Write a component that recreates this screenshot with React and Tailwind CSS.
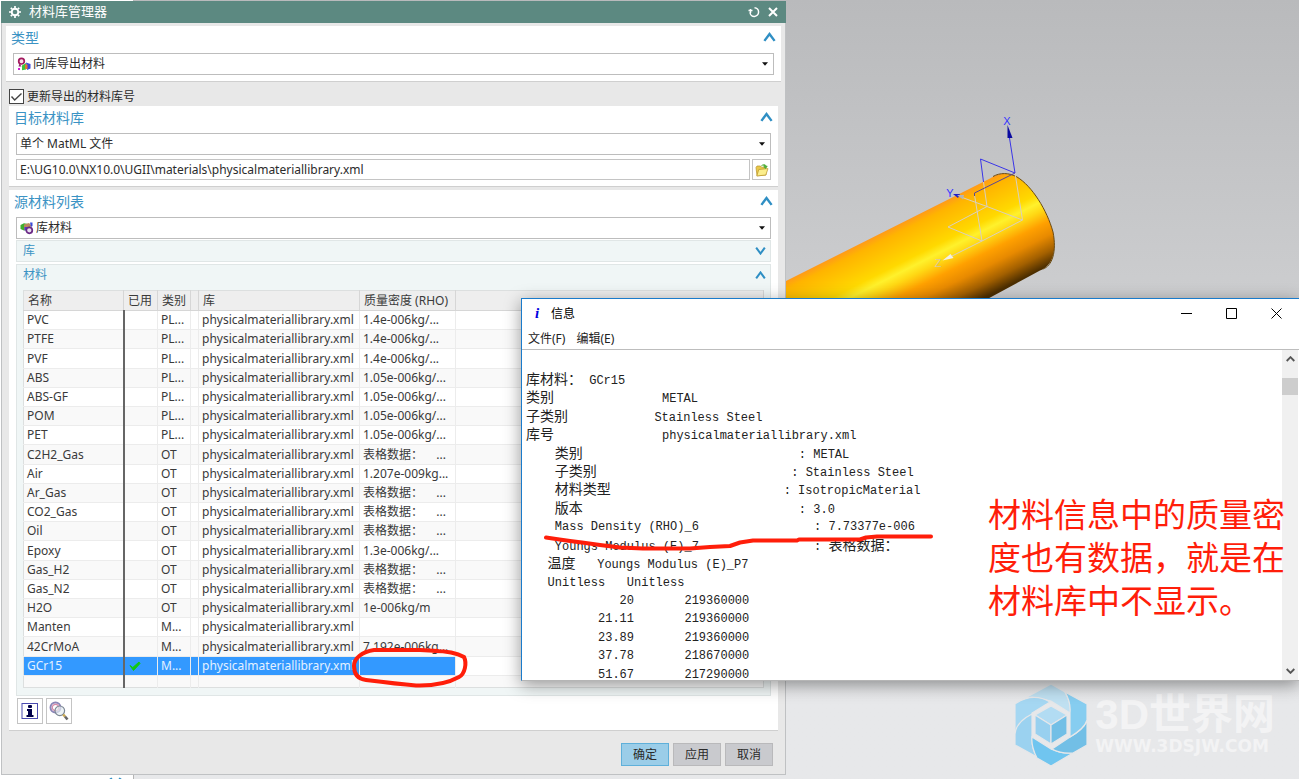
import { useState } from "react";
import clsx from "clsx";

const materials = [
  { name: "PVC", category: "PL...", density: "1.4e-006kg/..." },
  { name: "PTFE", category: "PL...", density: "1.4e-006kg/..." },
  { name: "PVF", category: "PL...", density: "1.4e-006kg/..." },
  { name: "ABS", category: "PL...", density: "1.05e-006kg/..." },
  { name: "ABS-GF", category: "PL...", density: "1.05e-006kg/..." },
  { name: "POM", category: "PL...", density: "1.05e-006kg/..." },
  { name: "PET", category: "PL...", density: "1.05e-006kg/..." },
  { name: "C2H2_Gas", category: "OT", tabular: true },
  { name: "Air", category: "OT", density: "1.207e-009kg..." },
  { name: "Ar_Gas", category: "OT", tabular: true },
  { name: "CO2_Gas", category: "OT", tabular: true },
  { name: "Oil", category: "OT", tabular: true },
  { name: "Epoxy", category: "OT", density: "1.3e-006kg/..." },
  { name: "Gas_H2", category: "OT", tabular: true },
  { name: "Gas_N2", category: "OT", tabular: true },
  { name: "H2O", category: "OT", density: "1e-006kg/m" },
  { name: "Manten", category: "M...", density: "" },
  { name: "42CrMoA", category: "M...", density: "7.192e-006kg..." },
  { name: "GCr15", category: "M...", density: "", used: true },
];

const pad = (n) => " ".repeat(n);

const row = (temp, value) => temp.padStart(15) + value.padStart(16);

const report = [
  "库材料： GCr15",
  "类别" + pad(15) + "METAL",
  "子类别" + pad(12) + "Stainless Steel",
  "库号" + pad(15) + "physicalmateriallibrary.xml",
  pad(4) + "类别" + pad(30) + ": METAL",
  pad(4) + "子类别" + pad(27) + ": Stainless Steel",
  pad(4) + "材料类型" + pad(24) + ": IsotropicMaterial",
  pad(4) + "版本" + pad(30) + ": 3.0",
  pad(4) + "Mass Density (RHO)_6" + pad(16) + ": 7.73377e-006",
  pad(4) + "Youngs Modulus (E)_7" + pad(16) + ": 表格数据：",
  pad(3) + "温度" + pad(3) + "Youngs Modulus (E)_P7",
  pad(3) + "Unitless" + pad(3) + "Unitless",
  row("20", "219360000"),
  row("21.11", "219360000"),
  row("23.89", "219360000"),
  row("37.78", "218670000"),
  row("51.67", "217290000"),
];

function Chevron({ down, small }) {
  return (
    <svg
      viewBox="0 0 14 10"
      className={clsx(small ? "h-2 w-[11px]" : "h-[10px] w-[13px]", down && "rotate-180")}
      fill="none"
      stroke="#2f8fc4"
      strokeWidth="2.6"
    >
      <path d="M1.5 9.2 7 1.8l5.500 7.400" />
    </svg>
  );
}

function SectionTitle({ children }) {
  return (
    <div className="-mr-[6px] -ml-[2px] flex h-6 items-center justify-between pr-1 pb-[2px] text-[14px] text-[#3b93c4]">
      <h2>{children}</h2>
      <button type="button" aria-label="折叠">
        <Chevron />
      </button>
    </div>
  );
}

function Dropdown({ label, value, icon }) {
  return (
    <div className="relative h-[22px]">
      <select
        aria-label={label}
        className={clsx(
          "h-full w-full appearance-none border border-[#bdbdbd] bg-white text-[12px] text-[#2b2b2b] outline-none",
          icon ? "pl-[19px]" : "pl-[3px]",
        )}
      >
        <option>{value}</option>
      </select>
      {icon ? <span className="pointer-events-none absolute top-1 left-1">{icon}</span> : null}
      <svg viewBox="0 0 6 4" className="pointer-events-none absolute top-[9px] right-[6px] h-1 w-[6px]">
        <path d="M0 0.300h6L3 3.700z" fill="#111" />
      </svg>
    </div>
  );
}

function ExportIcon() {
  return (
    <svg viewBox="0 0 14 14" className="h-[14px] w-[14px]">
      <circle cx="4.500" cy="4.200" r="2.800" fill="#f6dfe8" stroke="#a2185e" strokeWidth="1.700" />
      <path d="M2.500 6.500 1.500 9.500h3z" fill="#8a2a6a" />
      <path d="M5 8.500 9 6v6.500l-4 .8z" fill="#3cc43c" />
      <path d="M9 5.500 13.500 7v4.500L10 13z" fill="#3a49d8" />
      <path d="M8 7.500h2.500V12H8z" fill="#e07a2c" />
      <path d="M1 11h2v2H1z" fill="#d21fd2" />
    </svg>
  );
}

function LibraryIcon() {
  return (
    <svg viewBox="0 0 14 14" className="h-[14px] w-[14px]">
      <path d="M.5 4 4 2.200 8 3v5.500L4 9.500.5 8z" fill="#3fae2e" />
      <path d="M4 3.500 9 2l2.500 2.500L8 9H4z" fill="#b98a5c" />
      <path d="M4.500 6h3v3.500h-3z" fill="#4a3fd0" />
      <path d="M10 1.500h2.500V5L11 6z" fill="#3a49d8" />
      <circle cx="9.300" cy="9.300" r="3" fill="#e9dff2" stroke="#6b2a86" strokeWidth="1.700" />
    </svg>
  );
}

function FolderIcon() {
  return (
    <svg viewBox="0 0 14 14" className="h-[14px] w-[14px]">
      <path d="M1 4.500 2 3h3.500l1 1.200H11V12l-9 .8z" fill="#e9c84a" stroke="#b8932a" strokeWidth=".7" />
      <path d="M3.800 6.500 13 5.600 10.800 12 1.800 13z" fill="#fbee8c" stroke="#b8932a" strokeWidth=".7" />
      <path d="M6 3.200C7.200.8 10 .7 11 2.600L12.800 3 10.500 6 8 3.600l1.300-.2C8.800 2.400 7.500 2.200 6 3.200z" fill="#4fae3a" />
    </svg>
  );
}

function InfoIcon() {
  return (
    <svg viewBox="0 0 18 18" className="h-[18px] w-[18px]">
      <rect x="1" y="1.500" width="15.500" height="15" fill="#fff" stroke="#4a4ab0" />
      <rect x="7" y="3" width="4" height="3" rx="1" fill="#00004a" />
      <path d="M6 7h5v6h1.500v2H5.500v-2H7V9H6z" fill="#00004a" />
    </svg>
  );
}

function InspectIcon() {
  return (
    <svg viewBox="0 0 20 20" className="h-5 w-5" fill="none">
      <circle cx="6.500" cy="6.500" r="5" stroke="#8d86b8" strokeWidth="2" />
      <circle cx="6.500" cy="6.500" r="3.200" stroke="#d78aa8" strokeWidth="1.200" />
      <circle cx="10.800" cy="9.800" r="4.800" fill="#e6eef2" fillOpacity=".7" stroke="#7c8794" strokeWidth="1.200" />
      <path d="m14.200 13.500 1.800 2" stroke="#c9a850" strokeWidth="2.600" />
      <path d="m16 15.500 2.500 3" stroke="#666" strokeWidth="2.600" />
    </svg>
  );
}

function Model() {
  return (
    <svg viewBox="786 0 513 310" className="absolute top-0 left-[786px] h-[310px] w-[513px]" fill="none">
      <defs>
        <linearGradient id="steel" gradientUnits="userSpaceOnUse" x1="786" y1="281" x2="832.700" y2="373.900">
          <stop offset="0" stopColor="#ff9a1a" />
          <stop offset=".07" stopColor="#ffb400" />
          <stop offset=".22" stopColor="#ffc800" />
          <stop offset=".34" stopColor="#ffd900" />
          <stop offset=".42" stopColor="#fff12c" />
          <stop offset=".5" stopColor="#ffd814" />
          <stop offset=".62" stopColor="#ffa000" />
          <stop offset=".74" stopColor="#e88a00" />
          <stop offset=".88" stopColor="#a36000" />
          <stop offset="1" stopColor="#4c2e00" />
        </linearGradient>
      </defs>
      <path
        d="M786 281 990 178.500C998 173 1008 172 1017 177C1032 186 1047 210 1053 232C1057 252 1052 266 1040 270.500L980 303 786 310z"
        fill="url(#steel)"
      />
      <path d="M993 176.500C1000 172.500 1009 172.500 1017 177C1032 186 1047 210 1053 232C1057 252 1052 266 1043 269" stroke="#6b4a10" />
      <g stroke="#d9cfc0">
        <path d="m983.500 182 3.500 24.500-39 20.500 34 14 40.500-21-35.500-13.500-26-9.500" />
        <path d="m974.500 195 7.500 46-30 15M1015 173l7.500 47" />
      </g>
      <g stroke="#3a35e8">
        <path d="m1009.500 138 5.500 35-34.500-14 3 23" />
        <path d="m1015 173-40.500 20v3" stroke="#5a4596" />
      </g>
      <path d="m1007.500 125 5 13h-5z" fill="#0a0aa0" />
      <path d="m953 194 7 0-2 4z" fill="#2020c8" />
      <path d="m957 195 7 0-1 4.500z" fill="#b5b5b5" />
      <path d="m942.500 260.500 8-6.500 3 4z" fill="#f2efe6" />
      <g fontSize="11" fontFamily="Liberation Sans, sans-serif" textAnchor="middle">
        <text x="1007" y="125" fill="#3434ff">X</text>
        <text x="950" y="197" fill="#3434ff">Y</text>
        <text x="938" y="267" fill="#d8c8a0">Z</text>
      </g>
    </svg>
  );
}

function Watermark() {
  return (
    <div className="absolute right-6 bottom-[13px] flex items-center gap-2 text-white/50">
      <svg viewBox="0 0 72 82" className="h-[82px] w-[72px]" stroke="#e6e7e9" strokeWidth="1.200">
        <path d="M36 0 50 8Q58 24 55 29L36 17 17 13Q8 14 1 19z" fill="#bfe0f1" />
        <path d="M0 20Q18 8 35 18L17 29V52Q2 42 0 50z" fill="#a5d7f2" />
        <path d="M0 61V50Q1 38 17 30V54Q17 66 22 73z" fill="#9bd2f0" />
        <path d="M22 74Q16 62 17 53L36 65Q46 70 58 69L36 82z" fill="#70c5ef" />
        <path d="M72 36V61L58 69Q46 70 37 65L55 53Q70 44 72 36z" fill="#72bfe6" />
        <path d="M50 8 72 20V36Q70 44 55 53V29Q56 18 50 8z" fill="#86cdf0" />
        <path d="M36 22 52 31 36 41 20 31z" fill="#b2dcf3" />
        <path d="M20 31 36 41V60L20 50z" fill="#98d0ef" />
        <path d="M52 31 36 41V60L52 50z" fill="#72bfe6" />
      </svg>
      <div>
        <p className="font-['Liberation_Sans','Noto_Sans_CJK_SC',sans-serif] text-[42px] leading-[42px] font-bold">3D世界网</p>
        <p className="font-['DejaVu_Sans',sans-serif] text-[17px] leading-5 font-bold">WWW.3DSJW.COM</p>
      </div>
    </div>
  );
}

function MaterialTable({ selected, onSelect }) {
  const cell = "border-r border-[#ececec] px-[3px]";
  return (
    <table className="h-[398px] w-full table-fixed border-collapse border border-[#dcdfdf] bg-white text-left text-[12px] leading-[18px] whitespace-nowrap text-[#3a3a3a]">
      <colgroup>
        <col className="w-[100px]" />
        <col className="w-[34px]" />
        <col className="w-[33px]" />
        <col className="w-2" />
        <col className="w-[161px]" />
        <col className="w-[96px]" />
        <col />
      </colgroup>
      <thead>
        <tr className="h-5 bg-[#eeeeee] [&>th]:border-r [&>th]:border-b [&>th]:border-[#d6d6d6] [&>th]:px-1 [&>th]:font-normal">
          <th>名称</th>
          <th>已用</th>
          <th>类别</th>
          <th />
          <th>库</th>
          <th>质量密度 (RHO)</th>
          <th />
        </tr>
      </thead>
      <tbody>
        {materials.map((m) => {
          const active = m.name === selected;
          return (
            <tr
              key={m.name}
              onClick={() => onSelect(m.name)}
              className={clsx(
                "border-b border-[#ececec]",
                active ? "bg-[#3399ff] text-[#e4f1ff]" : "even:bg-[#f9f9f9]",
              )}
            >
              <td className="border-r-2 border-r-[#666] px-[3px]">{m.name}</td>
              <td className={cell}>
                {m.used ? (
                  <svg viewBox="0 0 12 10" className="ml-px h-[10px] w-3">
                    <path d="M1 4.500 3.800 6.500 10 1 11 2.500 4.500 9.500z" fill="#12c912" stroke="#12c912" />
                  </svg>
                ) : null}
              </td>
              <td className={cell}>{m.category}</td>
              <td className={cell} />
              <td className={cell}>physicalmateriallibrary.xml</td>
              <td className={cell}>
                {m.tabular ? (
                  <span className="flex justify-between pr-[6px]">
                    <span>表格数据：</span>
                    <span>...</span>
                  </span>
                ) : (
                  m.density
                )}
              </td>
              <td className={clsx(active && "bg-white")} />
            </tr>
          );
        })}
        <tr className="h-3 bg-[#f9f9f9]">
          <td className="border-r-2 border-r-[#666]" />
          <td className={cell} />
          <td className={cell} />
          <td className={cell} />
          <td className={cell} />
          <td className={cell} />
          <td />
        </tr>
      </tbody>
    </table>
  );
}

function LibraryDialog() {
  const [selected, setSelected] = useState("GCr15");
  const [update, setUpdate] = useState(true);
  const card = "border-b border-[#cfcfcf] bg-white px-[7px] pb-[6px]";
  const action = "h-[23px] w-12 border text-[12px] text-[#2b2b2b]";

  return (
    <section className="absolute top-px left-px w-[785px] border border-t-0 border-[#bfc1c3] bg-[#e8e8e8] pb-2 text-[12px] text-[#2b2b2b]">
      <header className="-mx-px flex h-[22px] items-center bg-[#5c8981] pr-2 pl-2 text-white">
        <svg viewBox="0 0 12 12" className="h-3 w-3" fill="none" stroke="#fff">
          <circle cx="6" cy="6" r="3.300" strokeWidth="1.900" />
          <path d="M6 0v2M6 10v2M0 6h2M10 6h2M1.800 1.800l1.400 1.400M8.800 8.800l1.400 1.400M10.200 1.800 8.800 3.200M3.200 8.800l-1.400 1.400" strokeWidth="1.700" />
        </svg>
        <h1 className="ml-2 flex-1 text-[13px]">材料库管理器</h1>
        <button type="button" aria-label="重置" className="mr-2">
          <svg viewBox="0 0 12 12" className="h-3 w-3" fill="none" stroke="#fff" strokeWidth="1.500">
            <path d="M6.500 1.800A4.300 4.300 0 1 1 2 6.500" />
            <path d="M.5 4.500h4M2.500 3v4" />
          </svg>
        </button>
        <button type="button" aria-label="关闭">
          <svg viewBox="0 0 10 10" className="h-[10px] w-[10px]" stroke="#fff" strokeWidth="2">
            <path d="m1 1 8 8M9 1 1 9" />
          </svg>
        </button>
      </header>

      <div className="mt-[3px] px-1">
        <div className={card}>
          <SectionTitle>类型</SectionTitle>
          <div className="pt-[3px]">
            <Dropdown label="类型" value="向库导出材料" icon={<ExportIcon />} />
          </div>
        </div>
      </div>

      <div className="px-[7px]">
        <label className="mt-[6px] flex h-[18px] items-center gap-[3px] pb-px">
          <input
            type="checkbox"
            checked={update}
            onChange={(e) => setUpdate(e.target.checked)}
            className="absolute h-[15px] w-[15px] appearance-none"
          />
          <svg viewBox="0 0 15 15" className="h-[15px] w-[15px]" fill="#fff" stroke="#444">
            <rect x=".5" y=".5" width="14" height="14" />
            {update ? <path d="m2.500 7.500 3.200 3.500 6.800-6.500" fill="none" strokeWidth="1.400" /> : null}
          </svg>
          更新导出的材料库号
        </label>

        <div className={card}>
          <SectionTitle>目标材料库</SectionTitle>
          <div className="flex flex-col gap-1 pt-[3px]">
            <Dropdown label="目标材料库" value="单个 MatML 文件" />
            <div className="flex h-[21px] gap-[2px]">
              <input
                aria-label="文件路径"
                defaultValue="E:\UG10.0\NX10.0\UGII\materials\physicalmateriallibrary.xml"
                className="min-w-0 flex-1 border border-[#c4c4c4] bg-white px-[3px] text-[12px] outline-none"
              />
              <button type="button" aria-label="浏览" className="flex w-[19px] items-center justify-center border border-[#c4c4c4] bg-white">
                <FolderIcon />
              </button>
            </div>
          </div>
        </div>

        <div className={clsx(card, "mt-[3px]")}>
          <SectionTitle>源材料列表</SectionTitle>
          <div className="pt-[3px]">
            <Dropdown label="源材料列表" value="库材料" icon={<LibraryIcon />} />
          </div>
          <div className="mt-px flex h-[22px] items-center justify-between border border-[#e0e6e6] bg-[#f0f6f6] pr-1 pl-[6px] text-[#3b93c4]">
            <h3>库</h3>
            <button type="button" aria-label="展开">
              <Chevron down small />
            </button>
          </div>
          <div className="mt-[2px] border border-[#e0e6e6] bg-[#f0f6f6] px-[6px] pb-[7px]">
            <div className="-mr-[2px] flex h-[25px] items-center justify-between pb-[6px] text-[#3b93c4]">
              <h3>材料</h3>
              <button type="button" aria-label="折叠">
                <Chevron small />
              </button>
            </div>
            <MaterialTable selected={selected} onSelect={setSelected} />
          </div>
          <div className="mt-[2px] flex gap-[3px] pl-px">
            <button type="button" aria-label="信息" className="flex h-[26px] w-[26px] items-center justify-center border border-[#c4c4c4]">
              <InfoIcon />
            </button>
            <button type="button" aria-label="检查" className="flex h-[26px] w-[26px] items-center justify-center border border-[#c4c4c4]">
              <InspectIcon />
            </button>
          </div>
        </div>

        <div className="mt-3 flex justify-end gap-1 pr-[5px]">
          <button type="button" className={clsx(action, "border-[#5fb0da] bg-[#9bcde8]")}>确定</button>
          <button type="button" className={clsx(action, "border-[#b9b9bb] bg-[#c9cace]")}>应用</button>
          <button type="button" className={clsx(action, "border-[#b9b9bb] bg-[#c9cace]")}>取消</button>
        </div>
      </div>
    </section>
  );
}

function ReportLine({ text }) {
  // CJK glyphs are two columns wide next to the 12px latin ones
  const parts = text.split(/([\u4e00-\u9fff\uff1a]+)/);
  return (
    <span className="block">
      {parts.map((part, i) =>
        i % 2 ? (
          <span key={i} className="text-[14px]">
            {part}
          </span>
        ) : (
          part
        ),
      )}
    </span>
  );
}

function InfoWindow() {
  return (
    <section className="absolute top-[298px] right-0 left-[521px] flex h-[383px] flex-col border-t border-b border-l border-t-[#1a7bcb] border-b-[#b5b5b5] border-l-[#1a7bcb] bg-white shadow-[0_4px_16px_rgba(0,0,0,0.4)]">
      <header className="flex h-[29px] items-center text-[12px] text-black">
        <span className="w-[29px] pl-[13px] font-['Liberation_Serif',serif] text-[15px] font-bold text-[#0000e0] italic">i</span>
        <h2 className="flex-1">信息</h2>
        <div className="flex">
          <button type="button" aria-label="最小化" className="flex w-[45px] justify-center">
            <svg viewBox="0 0 11 11" className="h-[11px] w-[11px]" stroke="#000"><path d="M0 5.500h11" /></svg>
          </button>
          <button type="button" aria-label="最大化" className="flex w-[45px] justify-center">
            <svg viewBox="0 0 11 11" className="h-[11px] w-[11px]" fill="none" stroke="#000"><path d="M.5.5h10v10H.5z" /></svg>
          </button>
          <button type="button" aria-label="关闭" className="flex w-[45px] justify-center">
            <svg viewBox="0 0 11 11" className="h-[11px] w-[11px]" stroke="#000"><path d="m.5.5 10 10M10.500.5l-10 10" /></svg>
          </button>
        </div>
      </header>
      <nav className="flex h-[22px] items-center gap-[11px] border-b border-[#bdbdbd] pl-[6px] text-[12px] text-[#222]">
        <button type="button">文件(F)</button>
        <button type="button">编辑(E)</button>
      </nav>
      <div className="flex min-h-0 flex-1">
        <pre className="grid h-[334px] flex-1 auto-rows-fr overflow-hidden pt-[21px] pl-1 font-['Liberation_Mono','Noto_Sans_CJK_SC',monospace] text-[12px] leading-[18px] text-[#222]">
          {report.map((line, i) => (
            <ReportLine key={i} text={line} />
          ))}
        </pre>
        <div className="mr-px flex w-4 flex-col items-center justify-between bg-[#f0f0f0] py-[6px]">
          <div className="flex w-full flex-col items-center gap-4">
            <svg viewBox="0 0 9 6" className="h-[6px] w-[9px]" fill="none" stroke="#555" strokeWidth="1.900"><path d="M.7 5 4.500 1.200 8.300 5" /></svg>
            <div className="h-[17px] w-full bg-[#cdcdcd]" />
          </div>
          <svg viewBox="0 0 9 6" className="h-[6px] w-[9px]" fill="none" stroke="#555" strokeWidth="1.900"><path d="M.7 1 4.500 4.800 8.300 1" /></svg>
        </div>
      </div>
    </section>
  );
}

function Annotations() {
  return (
    <>
      <svg
        viewBox="0 0 1299 779"
        className="pointer-events-none absolute top-0 left-0 h-[779px] w-[1299px]"
        fill="none"
        stroke="#ff1e0a"
        strokeWidth="4"
        strokeLinecap="round"
        strokeLinejoin="round"
      >
        <path d="M546 537.500 556 539 570 541 582 542.500 600 545 620 547.500 643 548.500H690L710 547 730 546 740 542.500 753 540.500H797L799 539.500H860L866 537.500 877 536.500H931" />
        <path d="M438 651 420 650H374C362 652 354 658 354 666C354 674 358 679 366 680C382 682 398 684 416 685.500C434 686 450 682 459 677C465 674 467 663 464 657C455 652 446 651 434 651" />
      </svg>
      <p className="pointer-events-none absolute top-[493px] left-[988px] w-[300px] text-[33px] leading-[43px] text-[#ff1e0a]">
        材料信息中的质量密度也有数据，就是在材料库中不显示。
      </p>
    </>
  );
}

export default function App() {
  return (
    <main className="relative min-h-screen overflow-hidden bg-linear-to-b from-[#b9babc] to-[#e7e8ea] to-90% font-['Noto_Sans','Noto_Sans_CJK_SC',sans-serif]">
      <div className="absolute inset-y-0 left-0 flex w-[134px] items-end justify-center border-r border-[#b5b5b5] bg-white pl-[98px]">
        <div className="-mb-2">
          <Chevron down />
        </div>
      </div>
      <Model />
      <Watermark />
      <LibraryDialog />
      <InfoWindow />
      <Annotations />
    </main>
  );
}
